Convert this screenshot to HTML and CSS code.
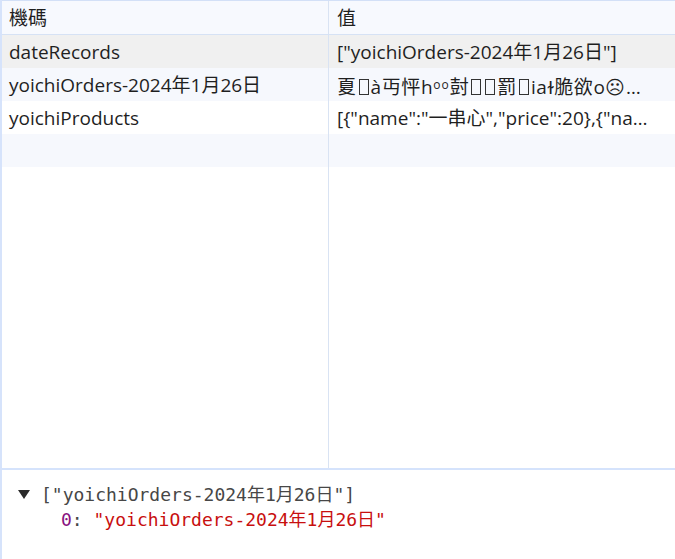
FILE: index.html
```html
<!DOCTYPE html>
<html lang="zh-Hant">
<head>
<meta charset="utf-8">
<link rel="stylesheet" href="styles.css">
</head>
<body>
<div class="panel">
  <div class="grid">
    <div class="row header">
      <div class="cell key">機碼</div>
      <div class="cell val">值</div>
    </div>
    <div class="row selected">
      <div class="cell key">dateRecords</div>
      <div class="cell val">["yoichiOrders-2024年1月26日"]</div>
    </div>
    <div class="row alt">
      <div class="cell key">yoichiOrders-2024年1月26日</div>
      <div class="cell val garbled">夏<span class="tofu"></span>à丏怦h<span class="sup">oo</span>尌<span class="tofu"></span><span class="tofu"></span>罰<span class="tofu"></span>iaɫ脆欲o☹…</div>
    </div>
    <div class="row">
      <div class="cell key">yoichiProducts</div>
      <div class="cell val">[{"name":"一串心","price":20},{"na…</div>
    </div>
    <div class="row alt empty">
      <div class="cell key"></div>
      <div class="cell val"></div>
    </div>
    <div class="filler">
      <div class="cell key"></div>
      <div class="cell val"></div>
    </div>
  </div>
  <div class="preview">
    <div class="line">
      <span class="tri"></span><span class="summary">["yoichiOrders-2024年1月26日"]</span>
    </div>
    <div class="line child">
      <span class="idx">0</span><span class="summary">: </span><span class="str">"yoichiOrders-2024年1月26日"</span>
    </div>
  </div>
</div>
</body>
</html>
```
FILE: styles.css
```css
html, body {
  margin: 0;
  padding: 0;
  background: #ffffff;
}
body {
  width: 675px;
  height: 559px;
  overflow: hidden;
  font-family: "Open Sans", "Noto Sans CJK TC", sans-serif;
  font-size: 19px;
  color: #1f1f1f;
}
.panel {
  display: flex;
  flex-direction: column;
  height: 559px;
  border-left: 2px solid #d6e3fb;
  box-sizing: border-box;
}
.grid {
  display: flex;
  flex-direction: column;
  height: 468px;
  border-top: 1px solid #d3e0f7;
  box-sizing: border-box;
}
.row {
  display: grid;
  grid-template-columns: 327px 1fr;
  height: 33px;
  flex: none;
}
.header {
  background: #f7f9fe;
  border-bottom: 1px solid #d6e2f5;
  height: 33px;
}
.selected {
  background: #f0f0f0;
}
.alt {
  background: #f6f8fd;
}
.filler {
  display: grid;
  grid-template-columns: 327px 1fr;
  flex: 1;
}
.cell {
  padding: 0 4px 0 7px;
  line-height: 34px;
  white-space: nowrap;
  overflow: hidden;
  min-width: 0;
}
.key {
  border-right: 1px solid #d9e3f3;
}
.val {
  padding-left: 8px;
}
.garbled {
  letter-spacing: 0.6px;
}
.sup {
  font-size: 12px;
  vertical-align: 5px;
  letter-spacing: 1px;
}
.tofu {
  display: inline-block;
  width: 10px;
  height: 16px;
  border: 1px solid #333;
  box-sizing: border-box;
  margin: 0 2px;
  vertical-align: -1px;
}
.preview {
  border-top: 2px solid #d5e3fc;
  flex: 1;
  padding-top: 12px;
  font-family: "DejaVu Sans Mono", "Noto Sans CJK TC", monospace;
  font-size: 18px;
  line-height: 25px;
}
.line {
  display: flex;
  align-items: center;
  white-space: pre;
  padding-left: 16px;
}
.child {
  padding-left: 59px;
}
.tri {
  width: 0;
  height: 0;
  border-left: 6px solid transparent;
  border-right: 6px solid transparent;
  border-top: 9px solid #2a2a2a;
  margin-right: 11px;
}
.summary {
  color: #474747;
}
.idx {
  color: #881280;
}
.str {
  color: #c80f0f;
}
```
